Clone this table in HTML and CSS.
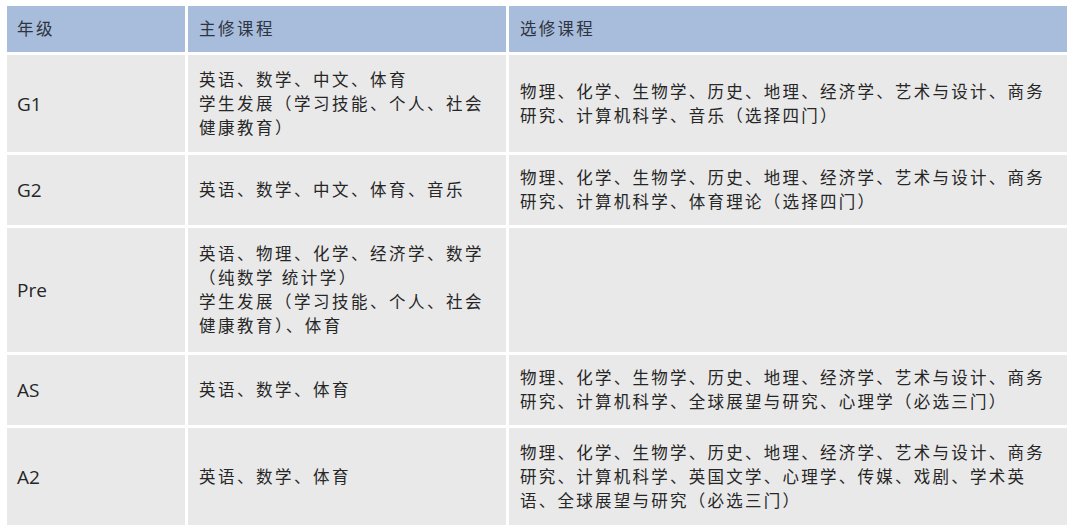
FILE: index.html
```html
<!DOCTYPE html>
<html lang="zh-CN">
<head>
<meta charset="utf-8">
<link rel="stylesheet" href="styles.css">
</head>
<body>
<div class="table">
  <div class="cell head grade-head">年级</div>
  <div class="cell head">主修课程</div>
  <div class="cell head elective">选修课程</div>

  <div class="cell grade">G1</div>
  <div class="cell">英语、数学、中文、体育<br>学生发展（学习技能、个人、社会<br>健康教育）</div>
  <div class="cell elective">物理、化学、生物学、历史、地理、经济学、艺术与设计、商务<br>研究、计算机科学、音乐（选择四门）</div>

  <div class="cell grade">G2</div>
  <div class="cell">英语、数学、中文、体育、音乐</div>
  <div class="cell elective">物理、化学、生物学、历史、地理、经济学、艺术与设计、商务<br>研究、计算机科学、体育理论（选择四门）</div>

  <div class="cell grade">Pre</div>
  <div class="cell">英语、物理、化学、经济学、数学<br>（纯数学 统计学）<br>学生发展（学习技能、个人、社会<br>健康教育）、体育</div>
  <div class="cell elective"></div>

  <div class="cell grade">AS</div>
  <div class="cell">英语、数学、体育</div>
  <div class="cell elective">物理、化学、生物学、历史、地理、经济学、艺术与设计、商务<br>研究、计算机科学、全球展望与研究、心理学（必选三门）</div>

  <div class="cell grade">A2</div>
  <div class="cell">英语、数学、体育</div>
  <div class="cell elective">物理、化学、生物学、历史、地理、经济学、艺术与设计、商务<br>研究、计算机科学、英国文学、心理学、传媒、戏剧、学术英<br>语、全球展望与研究（必选三门）</div>
</div>
</body>
</html>
```
FILE: styles.css
```css
html, body {
  margin: 0;
  padding: 0;
  background: #ffffff;
}

body {
  padding: 6px 0 0 7px;
  font-family: "Open Sans", "Noto Sans CJK SC", sans-serif;
  color: #262626;
}

.table {
  display: grid;
  grid-template-columns: 178px 318px 558px;
  grid-template-rows: 46px 97px 70px 124px 70px 97px;
  gap: 3px;
  width: 1060px;
}

.cell {
  background: #e9e9e9;
  display: flex;
  align-items: center;
  padding: 0 6px 0 11px;
  font-size: 16.5px;
  letter-spacing: 2.5px;
  line-height: 24px;
  white-space: nowrap;
}

.cell.elective {
  padding-left: 11px;
  letter-spacing: 2.25px;
}

.cell.head {
  background: #a8bddc;
  color: #2e3440;
}

.cell.grade-head {
  padding-left: 10px;
}

.cell.grade {
  padding-left: 10px;
  font-size: 19px;
  letter-spacing: 0;
}
```
